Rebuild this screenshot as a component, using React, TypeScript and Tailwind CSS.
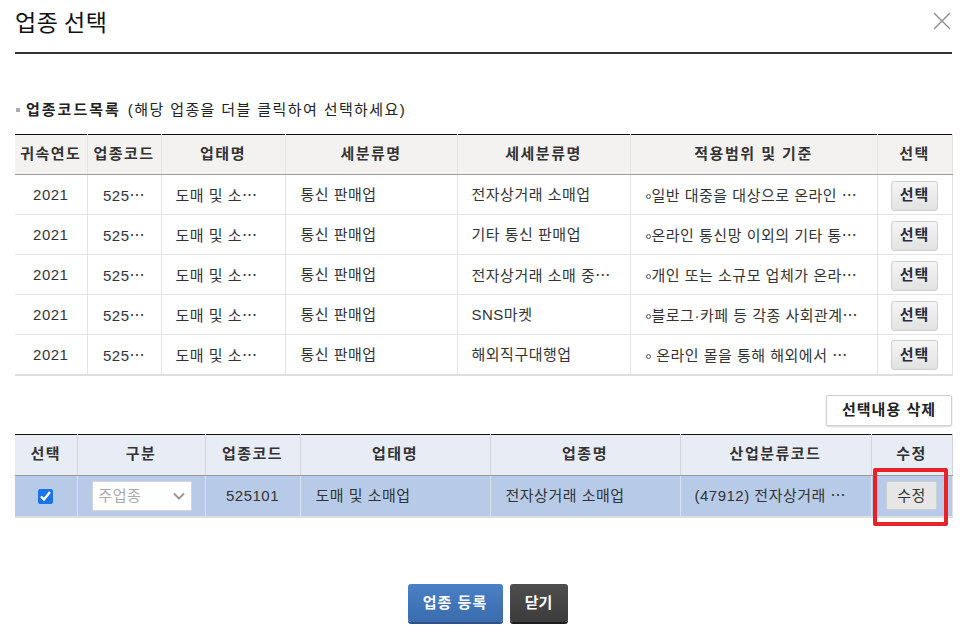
import { useState } from "react";

const font = { fontFamily: '"Liberation Sans", "Noto Sans CJK KR", sans-serif' };
const cjk = { fontFamily: '"Noto Sans CJK KR", sans-serif' };

// renders text with a mid-height ellipsis and a small ring bullet like the original
function T({ s }: { s: string }) {
  const parts = s.split(/(…|◦)/);
  return (
    <>
      {parts.map((p, i) =>
        p === "…" ? (
          <span key={i} style={cjk}>
            …
          </span>
        ) : p === "◦" ? (
          <span
            key={i}
            className="mr-[1px] inline-block h-[5px] w-[5px] rounded-full border border-[#555] align-middle"
          />
        ) : (
          <span key={i}>{p}</span>
        ),
      )}
    </>
  );
}

const rows = [
  { sub: "전자상거래 소매업", desc: "◦일반 대중을 대상으로 온라인 …" },
  { sub: "기타 통신 판매업", desc: "◦온라인 통신망 이외의 기타 통…" },
  { sub: "전자상거래 소매 중…", desc: "◦개인 또는 소규모 업체가 온라…" },
  { sub: "SNS마켓", desc: "◦블로그·카페 등 각종 사회관계…" },
  { sub: "해외직구대행업", desc: "◦ 온라인 몰을 통해 해외에서 …" },
];

const th1 =
  "h-[40px] border-r border-[#e4e4e4] border-b border-b-[#9a9a9a] bg-[#f3f2f1] text-center text-[15px] font-bold tracking-[1.5px] text-[#333]";
const td1 =
  "h-[40px] pt-[2px] border-r border-b border-[#e4e4e4] text-[15px] tracking-[0.5px] text-[#333] whitespace-nowrap overflow-hidden";

const th2 =
  "h-[41px] border-r border-[#cdd4de] border-b border-b-[#9a9a9a] bg-[#e8edf5] text-center text-[15px] font-bold tracking-[1.5px] text-[#333]";
const td2 =
  "h-[42px] border-r border-[#dbe3ef] bg-[#b7cbe8] text-[15px] tracking-[0.5px] text-[#333] whitespace-nowrap";

export default function App() {
  const [checked, setChecked] = useState(true);

  return (
    <div style={font} className="w-[965px] min-h-[636px] bg-white pl-[15px] pr-[13px]">
      {/* header */}
      <div className="flex h-[52px] items-start justify-between border-b-2 border-[#333] box-content">
        <h1 style={cjk} className="pt-[5px] text-[23px] leading-[32px] font-normal tracking-[0.5px] text-[#111]">
          업종 선택
        </h1>
        <button type="button" className="mt-[12px] mr-[1px] text-[#8a8a8a]">
          <svg width="18" height="18" viewBox="0 0 18 18" fill="none" stroke="currentColor" strokeWidth="1.3">
            <path d="M1 1L17 17M17 1L1 17" />
          </svg>
        </button>
      </div>

      {/* section title */}
      <div className="mt-[46px] flex items-center h-[20px] text-[15px] text-[#222]">
        <span className="mr-[6px] ml-[1px] inline-block h-[4px] w-[4px] bg-[#aaa]" />
        <span className="font-bold tracking-[2px]">업종코드목록</span>
        <span className="ml-[7px] tracking-[1.4px]">(해당 업종을 더블 클릭하여 선택하세요)</span>
      </div>

      {/* table 1 */}
      <table className="mt-[14px] w-[937px] table-fixed border-collapse border-t border-t-[#111] border-b-2 border-b-[#dedede]">
        <colgroup>
          <col className="w-[72px]" />
          <col className="w-[74px]" />
          <col className="w-[124px]" />
          <col className="w-[172px]" />
          <col className="w-[173px]" />
          <col className="w-[247px]" />
          <col className="w-[75px]" />
        </colgroup>
        <thead>
          <tr>
            <th className={th1}>귀속연도</th>
            <th className={th1}>업종코드</th>
            <th className={th1}>업태명</th>
            <th className={th1}>세분류명</th>
            <th className={th1}>세세분류명</th>
            <th className={th1}>적용범위 및 기준</th>
            <th className={th1}>선택</th>
          </tr>
        </thead>
        <tbody>
          {rows.map((r, i) => (
            <tr key={i}>
              <td className={`${td1} text-center`}>2021</td>
              <td className={`${td1} text-center`}>
                <T s="525…" />
              </td>
              <td className={`${td1} pl-[14px]`}>
                <T s="도매 및 소…" />
              </td>
              <td className={`${td1} pl-[15px]`}>통신 판매업</td>
              <td className={`${td1} pl-[14px]`}>
                <T s={r.sub} />
              </td>
              <td className={`${td1} pl-[15px]`}>
                <T s={r.desc} />
              </td>
              <td className={`${td1} text-center`}>
                <button
                  type="button"
                  className="h-[30px] w-[47px] rounded-[3px] border border-[#cfcfcf] bg-gradient-to-b from-[#f5f5f5] to-[#e2e2e2] text-[15px] font-bold tracking-[1px] text-[#2b2b3b]"
                >
                  선택
                </button>
              </td>
            </tr>
          ))}
        </tbody>
      </table>

      {/* delete button */}
      <div className="mt-[19px] flex justify-end">
        <button
          type="button"
          className="h-[31px] w-[126px] rounded-[2px] border border-[#cfcfcf] bg-white text-[15px] font-bold tracking-[1px] text-[#222] shadow-[0_1px_2px_rgba(0,0,0,0.15)]"
        >
          선택내용 삭제
        </button>
      </div>

      {/* table 2 */}
      <table className="mt-[8px] w-[937px] table-fixed border-collapse border-t border-t-[#111] border-b-2 border-b-[#dedede]">
        <colgroup>
          <col className="w-[62px]" />
          <col className="w-[128px]" />
          <col className="w-[95px]" />
          <col className="w-[190px]" />
          <col className="w-[190px]" />
          <col className="w-[191px]" />
          <col className="w-[81px]" />
        </colgroup>
        <thead>
          <tr>
            <th className={th2}>선택</th>
            <th className={th2}>구분</th>
            <th className={th2}>업종코드</th>
            <th className={th2}>업태명</th>
            <th className={th2}>업종명</th>
            <th className={th2}>산업분류코드</th>
            <th className={th2}>수정</th>
          </tr>
        </thead>
        <tbody>
          <tr>
            <td className={`${td2} text-center`}>
              <input
                type="checkbox"
                checked={checked}
                onChange={() => setChecked(!checked)}
                className="h-[15px] w-[15px] align-middle accent-[#1a73e8]"
              />
            </td>
            <td className={`${td2} pl-[14px]`}>
              <div className="flex h-[30px] w-[100px] items-center justify-between border border-[#d6d6d6] bg-white pl-[6px] pr-[6px] text-[15px] text-[#aaa]">
                <span>주업종</span>
                <svg width="12" height="8" viewBox="0 0 12 8" fill="none" stroke="#999" strokeWidth="2">
                  <path d="M1 1.5L6 6.5L11 1.5" />
                </svg>
              </div>
            </td>
            <td className={`${td2} text-center`}>525101</td>
            <td className={`${td2} pl-[15px]`}>도매 및 소매업</td>
            <td className={`${td2} pl-[15px]`}>전자상거래 소매업</td>
            <td className={`${td2} overflow-hidden pl-[14px]`}>
              <T s="(47912) 전자상거래 …" />
            </td>
            <td className={`${td2} relative text-center`}>
              <button
                type="button"
                className="h-[29px] w-[51px] rounded-[2px] border border-[#cfcfcf] bg-[#e6e6e6] text-[15px] text-[#333]"
              >
                수정
              </button>
              <span className="pointer-events-none absolute left-[1px] top-[-8px] h-[58px] w-[75px] rounded-[2px] border-4 border-[#e8222a]" />
            </td>
          </tr>
        </tbody>
      </table>

      {/* bottom buttons */}
      <div className="mt-[66px] flex justify-center gap-[7px] pl-[8px]">
        <button
          type="button"
          className="h-[38px] w-[95px] rounded-[3px] bg-gradient-to-b from-[#4a80c6] to-[#3a6cad] text-[15px] font-bold tracking-[1px] text-white shadow-[0_2px_0_#2c5288]"
        >
          업종 등록
        </button>
        <button
          type="button"
          className="h-[38px] w-[58px] rounded-[3px] bg-gradient-to-b from-[#4e4e4e] to-[#3c3c3c] text-[15px] font-bold text-white shadow-[0_2px_0_#1e1e1e]"
        >
          닫기
        </button>
      </div>
    </div>
  );
}
